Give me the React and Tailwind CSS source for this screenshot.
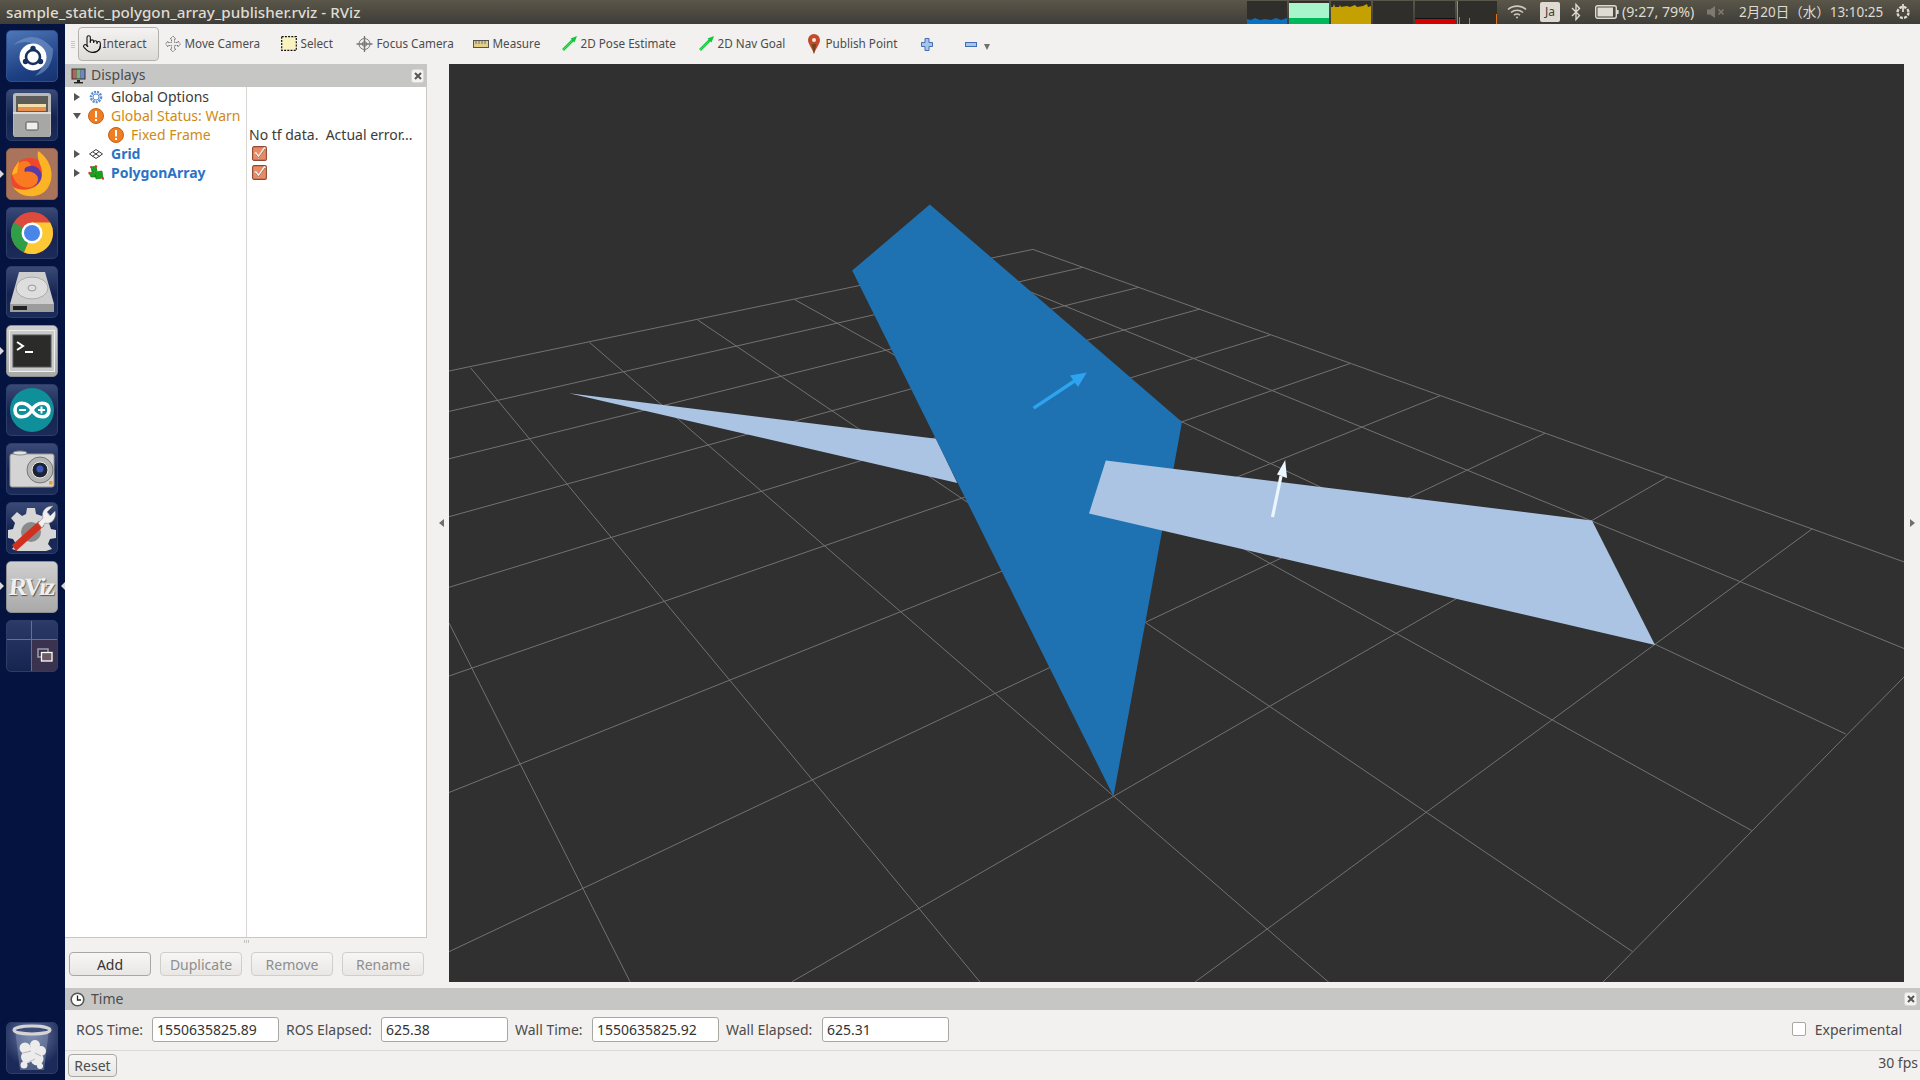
import React from "react";
import { Pointer } from "lucide-react";

const gridLines = [
  [1032.9,249.4,449,371],[1082.9,267.3,449,411.4],[1139,287.3,449,458.8],[1200,309,449,516.7],
  [1270,335,449,587.3],[1350,363.5,449,676],[1440,395.8,449,792.5],[1545,433.3,449,951.7],
  [1667.4,477,792,981.7],[1812.3,528.8,1195,982],[1904,677,1603,982],
  [1032.9,249.4,1904.3,562],[968,266.4,1904,648.5],[893,286,1845.8,734],[794.6,299.6,1751.6,830.5],
  [697.7,320,1632.5,951.6],[589.5,342.4,1329,982.5],[470.6,367.8,980,982],[449,622.9,630,981.7],
];

function Viewport() {
  return (
    <svg viewBox="449 64 1455 918" className="block w-[1455px] h-[918px] bg-[#303030]">
      {gridLines.map((l, i) => (
        <line key={i} x1={l[0]} y1={l[1]} x2={l[2]} y2={l[3]} stroke="#727272" strokeWidth="1" />
      ))}
      <polygon points="569,393.2 936,438.8 957.3,482.9" fill="#abc4e4" />
      <polygon points="929.8,204.5 852.2,270.6 1113.5,796.3 1182,422" fill="#1f72b1" />
      <polygon points="1105.8,460.4 1592,520.4 1655,645 1089,513.5" fill="#abc4e4" />
      <line x1="1033.6" y1="408.2" x2="1076" y2="380" stroke="#2ea3ef" strokeWidth="3.4" />
      <polygon points="1086.8,372.6 1070,375.5 1078,387" fill="#2ea3ef" />
      <line x1="1272.5" y1="517" x2="1281" y2="476" stroke="#eaf7ff" strokeWidth="3.2" />
      <polygon points="1285.2,460 1277,474.5 1287,478" fill="#eaf7ff" />
    </svg>
  );
}

function Tile({ children, active, bg }) {
  const cls = active
    ? "bg-[linear-gradient(180deg,#cfcfcf,#a9a9a9)] border-[#8f8f8f]"
    : "bg-[linear-gradient(180deg,#3a4a78,#14234f_55%,#1c2c5a)] border-[#2e3c68]";
  return (
    <div className={`relative w-[52px] h-[52px] rounded-[5px] border overflow-hidden flex items-center justify-center shrink-0 ${bg || cls}`}>
      {children}
    </div>
  );
}

function Launcher() {
  return (
    <div className="relative w-[65px] h-full shrink-0 bg-[#04133f] flex flex-col items-start pl-[6px] pt-[6px] gap-[7px] pb-[6px]">
      <Tile bg="bg-[linear-gradient(160deg,#4f78b8,#1d3f83_70%,#17336f)] border-[#2f4f8c]">
        <svg width="46" height="46" viewBox="0 0 46 46">
          <path d="M4 12 Q26 -6 44 16 Q44 38 26 43 Q40 30 34 18 Q22 4 4 12Z" fill="#7f9fd0" opacity=".55" />
          <circle cx="24" cy="24" r="13.5" fill="#fff" />
          <circle cx="24" cy="24" r="7" fill="none" stroke="#16305f" strokeWidth="2.6" />
          <circle cx="24" cy="15.5" r="2.7" fill="#16305f" /><circle cx="16.5" cy="28.5" r="2.7" fill="#16305f" /><circle cx="31.5" cy="28.5" r="2.7" fill="#16305f" />
        </svg>
      </Tile>
      <Tile>
        <svg width="44" height="46" viewBox="0 0 44 46">
          <rect x="3" y="1" width="38" height="44" rx="3" fill="#b9bab8" />
          <rect x="6" y="4" width="32" height="16" fill="#5c5c5a" />
          <rect x="8" y="12" width="28" height="3" fill="#f4dfa9" /><rect x="8" y="15" width="28" height="4" fill="#e68f52" />
          <rect x="4" y="20" width="36" height="25" fill="#a7a8a6" />
          <rect x="3" y="20" width="38" height="2" fill="#dadad8" />
          <rect x="16" y="30" width="12" height="8" rx="1" fill="#efefef" stroke="#555" />
        </svg>
      </Tile>
      <Tile bg="bg-[#a9735c] border-[#8d5f4c]">
        <svg width="50" height="50" viewBox="0 0 50 50">
          <circle cx="23" cy="28" r="19" fill="#f0462a" />
          <circle cx="24" cy="27" r="10.5" fill="#5b3aa6" />
          <path d="M31 2 C44 10 49 28 40 40 C32 50 14 50 6 38 C17 44 33 40 35 27 C36 16 29 12 31 2Z" fill="#fcb424" />
          <path d="M5 24 C8 12 22 8 24 17 C20 17 16 19 18 23 C26 21 34 27 30 34 C24 42 8 40 5 24Z" fill="#f97a21" />
          <path d="M12 12 C9 16 6 20 5 26 L10 24Z" fill="#fcb424" />
        </svg>
      </Tile>
      <Tile>
        <svg width="44" height="44" viewBox="0 0 44 44">
          <circle cx="22" cy="22" r="21" fill="#de4a3c" />
          <path d="M22 22 L3.8 11.5 A21 21 0 0 0 14 41.4Z" fill="#2f9e47" />
          <path d="M22 22 L14 41.4 A21 21 0 0 0 40.2 11.5 L22 11.5Z" fill="#fcc934" />
          <circle cx="22" cy="22" r="10.5" fill="#fff" /><circle cx="22" cy="22" r="8" fill="#4a86e8" />
        </svg>
      </Tile>
      <Tile>
        <svg width="46" height="44" viewBox="0 0 46 44">
          <path d="M10 2 H36 L45 34 V42 H1 V34Z" fill="#cdcdcd" />
          <path d="M1 34 H45 V42 H1Z" fill="#9c9c9c" />
          <rect x="4" y="36" width="14" height="4" fill="#222" />
          <ellipse cx="23" cy="18" rx="16" ry="11" fill="#dedede" stroke="#aaa" />
          <ellipse cx="23" cy="18" rx="4" ry="3" fill="none" stroke="#999" />
        </svg>
      </Tile>
      <Tile active>
        <svg width="46" height="42" viewBox="0 0 46 42">
          <rect x="0.5" y="0.5" width="45" height="41" fill="#c9c9c9" stroke="#eee" />
          <rect x="4" y="5" width="38" height="32" fill="#2b2b2a" stroke="#555" />
          <path d="M8 12 L14 16 L8 20" fill="none" stroke="#fff" strokeWidth="2" />
          <rect x="16" y="21" width="8" height="2" fill="#fff" />
        </svg>
      </Tile>
      <Tile>
        <svg width="46" height="46" viewBox="0 0 46 46">
          <circle cx="23" cy="23" r="22" fill="#0f8f9a" />
          <path d="M23 23 C18 14 6 14 6 23 C6 32 18 32 23 23 C28 14 40 14 40 23 C40 32 28 32 23 23Z" fill="none" stroke="#fff" strokeWidth="3.6" />
          <path d="M10 23 H17 M29 23 H36 M32.5 19.5 V26.5" stroke="#fff" strokeWidth="2" />
        </svg>
      </Tile>
      <Tile>
        <svg width="46" height="40" viewBox="0 0 46 40">
          <rect x="1" y="5" width="44" height="33" rx="2" fill="#d4d4d4" stroke="#999" />
          <ellipse cx="11" cy="4" rx="7" ry="2" fill="#e2e2e2" stroke="#888" />
          <circle cx="31" cy="21" r="13" fill="#b5b5b5" stroke="#777" />
          <circle cx="31" cy="21" r="8" fill="#1d2330" stroke="#eee" />
          <circle cx="31" cy="20" r="3.5" fill="#3a57c4" />
          <rect x="40" y="32" width="3.5" height="3.5" fill="#f0a020" />
        </svg>
      </Tile>
      <Tile>
        <svg width="48" height="48" viewBox="0 0 48 48">
          <path d="M19 4 H27 L28 10 L34 12 L39 8 L45 14 L41 19 L43 25 L48 26 V34 L42 35 L40 40 L44 45 L38 47 H10 L4 45 L8 40 L5 35 L0 34 V26 L5 25 L7 19 L3 14 L9 8 L14 12 L18 10Z" fill="#d6d6d6" />
          <circle cx="23" cy="28" r="10" fill="#8a8a8a" />
          <path d="M4 41 L8 47 L36 22 L31 17Z" fill="#d2301f" />
          <path d="M30 19 L35 14 C33 8 37 2 45 2 L39 8 L42 12 L47 7 C49 15 43 21 37 19 L34 24Z" fill="#f0f0f0" stroke="#888" strokeWidth=".6" />
        </svg>
      </Tile>
      <Tile active>
        <span className="font-['Liberation_Serif',serif] font-bold text-[25px] tracking-[-2px] text-[#efefef] [text-shadow:1px_1px_1px_#555] -skew-x-6 pr-[2px]">RViz</span>
      </Tile>
      <Tile bg="bg-[linear-gradient(180deg,#2c3a68,#15244f)] border-[#2e3c68]">
        <div className="grid grid-cols-2 w-full h-full">
          <div className="border-r border-b border-[#66708f]" />
          <div className="border-b border-[#66708f]" />
          <div className="border-r border-[#66708f]" />
          <div className="bg-[#3a3350] flex items-center justify-center">
            <svg width="16" height="14" viewBox="0 0 16 14">
              <rect x="1" y="1" width="10" height="8" fill="none" stroke="#a0a0a8" strokeWidth="1.5" />
              <rect x="4.5" y="4.5" width="10.5" height="8.5" fill="#6c5b66" stroke="#fff" strokeWidth="1.3" />
            </svg>
          </div>
        </div>
      </Tile>
      <div className="mt-auto">
        <Tile bg="bg-[radial-gradient(circle_at_50%_25%,#6f7ea6,#1b2a58_70%)] border-[#2e3c68]">
          <svg width="42" height="48" viewBox="0 0 42 48">
            <path d="M4 6 L9 46 H33 L38 6Z" fill="#8e9cbc" opacity=".45" />
            <ellipse cx="21" cy="6" rx="18" ry="4" fill="#3f4d78" stroke="#d4d4d4" strokeWidth="3" />
            <g fill="#ececec">
              <circle cx="14" cy="24" r="5.5" /><circle cx="24" cy="21" r="5" /><circle cx="30" cy="27" r="5" />
              <circle cx="16" cy="33" r="6" /><circle cx="26" cy="35" r="6.5" /><circle cx="13" cy="41" r="3.5" /><circle cx="29" cy="42" r="3" />
              <circle cx="21" cy="28" r="5" />
            </g>
            <path d="M12 29 L20 27 M24 29 L30 32 M18 38 L24 35" stroke="#b5b5b5" />
          </svg>
        </Tile>
      </div>
      <span className="absolute left-0 top-[323px] w-0 h-0 border-y-[4px] border-y-transparent border-l-[4px] border-l-[#d8d8d8]" />
      <span className="absolute left-0 top-[558px] w-0 h-0 border-y-[4px] border-y-transparent border-l-[4px] border-l-[#d8d8d8]" />
      <span className="absolute right-0 top-[558px] w-0 h-0 border-y-[4px] border-y-transparent border-r-[4px] border-r-[#d8d8d8]" />
      <span className="absolute left-0 top-[146px] w-0 h-0 border-y-[4px] border-y-transparent border-l-[4px] border-l-[#d8d8d8]" />
    </div>
  );
}

function Graph({ children, left }) {
  return <div className={`relative w-[40px] h-[23px] bg-[#2f2e2b] overflow-hidden ${left}`}>{children}</div>;
}

function TopBar() {
  return (
    <div className="h-[24px] shrink-0 flex items-center bg-[linear-gradient(180deg,#5a5649,#3e3d38)] text-[#dfdbd2] text-[14.2px] pl-[6px]">
      <span className="w-[1241px] shrink-0 whitespace-nowrap text-[15.2px] font-medium">sample_static_polygon_array_publisher.rviz - RViz</span>
      <div className="flex gap-[2px] self-end">
        <Graph>
          <svg className="absolute inset-0" width="40" height="23" viewBox="0 0 40 23"><path d="M0 23 V18 L4 19 L8 17 L13 19 L18 18 L24 19 L29 17 L34 19 L40 17 V23Z" fill="#0a70c0" /></svg>
        </Graph>
        <Graph>
          <div className="absolute inset-x-0 top-[2px] h-[15px] bg-[#a9f5cb]" />
          <div className="absolute inset-x-0 bottom-0 h-[6px] bg-[#00b85c]" />
        </Graph>
        <Graph>
          <svg className="absolute inset-0" width="40" height="23" viewBox="0 0 40 23"><path d="M0 23 V6 L2 6 L3 3 L4 6 L8 6 L9 4 L10 6 L16 5 L19 6 L24 4 L26 6 L32 5 L36 3 L37 6 L40 5 V23Z" fill="#c4a000" /></svg>
        </Graph>
        <Graph />
        <Graph>
          <div className="absolute inset-x-0 bottom-0 h-[5px] bg-[#d40000]" />
          <div className="absolute inset-x-0 bottom-[5px] h-px bg-[#111]" />
        </Graph>
        <Graph>
          <div className="absolute left-0 top-0 w-px h-[23px] bg-[#e8701a]" />
          <div className="absolute left-[2px] bottom-0 w-px h-[7px] bg-[#e8701a]" />
          <div className="absolute left-[12px] bottom-0 w-px h-[6px] bg-[#e8701a]" />
          <div className="absolute right-0 bottom-0 w-px h-[10px] bg-[#e8701a]" />
        </Graph>
      </div>
      <svg className="ml-[10px] shrink-0" width="20" height="16" viewBox="0 0 20 16" fill="none" stroke="#cfcbc3" strokeWidth="1.6">
        <path d="M1 5.5 C6 1 14 1 19 5.5" /><path d="M4 8.5 C7.5 5.5 12.5 5.5 16 8.5" /><path d="M7 11.2 C9 9.6 11 9.6 13 11.2" /><circle cx="10" cy="13.5" r="1" fill="#cfcbc3" stroke="none" />
      </svg>
      <span className="ml-[13px] w-[20px] h-[20px] shrink-0 rounded-[2px] bg-[#dfdbd2] text-[#3c3b37] text-[12px] flex items-center justify-center">Ja</span>
      <svg className="ml-[11px] shrink-0" width="10" height="18" viewBox="0 0 10 18" fill="none" stroke="#dfdbd2" strokeWidth="1.4">
        <path d="M1 5 L8.5 12.5 L5 16.5 V1.5 L8.5 5.5 L1 13" />
      </svg>
      <svg className="ml-[14px] shrink-0" width="24" height="14" viewBox="0 0 24 14">
        <rect x="0.7" y="0.7" width="20.6" height="12.6" rx="2" fill="none" stroke="#dfdbd2" strokeWidth="1.4" />
        <rect x="2.5" y="2.5" width="15.5" height="9" fill="#dfdbd2" />
        <rect x="22" y="5" width="1.6" height="4" fill="#dfdbd2" />
      </svg>
      <span className="ml-[3px] w-[73px] shrink-0 whitespace-nowrap">(9:27, 79%)</span>
      <svg className="ml-[12px] shrink-0" width="18" height="14" viewBox="0 0 18 14" fill="#7d7a72">
        <path d="M0 4.5 H3 L8 1 V13 L3 9.5 H0Z" />
        <path d="M11.5 4.5 L16.5 9.5 M16.5 4.5 L11.5 9.5" stroke="#7d7a72" strokeWidth="1.6" />
      </svg>
      <span className="ml-[14px] w-[143px] shrink-0 whitespace-nowrap text-[13.5px]">2月20日（水）13:10:25</span>
      <svg className="ml-[13px] shrink-0" width="16" height="18" viewBox="0 0 16 18" fill="none" stroke="#dfdbd2" strokeWidth="2.4">
        <circle cx="8" cy="9.5" r="5.5" strokeDasharray="3 1.3" />
        <path d="M8 1 V9" strokeWidth="1.8" />
      </svg>
    </div>
  );
}

const Arrow = () => (
  <svg className="shrink-0" width="17" height="17" viewBox="0 0 17 17">
    <line x1="2" y1="15" x2="12" y2="5" stroke="#10c93a" strokeWidth="2.6" />
    <polygon points="16,1 9.5,3.5 13.5,7.5" fill="#10c93a" />
    <line x1="2" y1="15" x2="11" y2="6" stroke="#55f070" strokeWidth=".7" />
  </svg>
);

function ToolItem({ w, icon, label, gap = "gap-[4px]" }) {
  return (
    <div className={`flex items-center shrink-0 ${gap} ${w}`}>
      {icon}
      <span className="whitespace-nowrap">{label}</span>
    </div>
  );
}

function Toolbar() {
  return (
    <div className="h-[40px] shrink-0 bg-[#f2f1ef] flex items-center text-[11.7px] text-[#4c4c4c]">
      <div className="ml-[4px] w-[8.5px] flex flex-col gap-[1px] items-center shrink-0">
        <span className="w-[4px] h-px bg-[#c9c7c2]" /><span className="w-[4px] h-px bg-[#c9c7c2]" /><span className="w-[4px] h-px bg-[#c9c7c2]" /><span className="w-[4px] h-px bg-[#c9c7c2]" />
      </div>
      <div className="w-[81px] h-[34px] shrink-0 rounded-[4px] border border-[#b3b1ab] bg-[linear-gradient(180deg,#f4f3f1,#dedcd8)] flex items-center pl-[3px] gap-[1px] text-[12px]">
        <Pointer size={20} strokeWidth={1.3} color="#111" className="shrink-0" />
        <span>Interact</span>
      </div>
      <div className="w-[6px] shrink-0" />
      <ToolItem w="w-[116px]" label="Move Camera" icon={
        <svg className="shrink-0" width="16" height="18" viewBox="0 0 16 18" fill="#eee" stroke="#666" strokeWidth=".9" strokeDasharray="1.2 .6">
          <path d="M8 1 L11 4 H9.5 V7.5 H13 V6 L15.5 9 L13 12 V10.5 H9.5 V14 H11 L8 17 L5 14 H6.5 V10.5 H3 V12 L.5 9 L3 6 V7.5 H6.5 V4 H5Z" />
        </svg>} />
      <ToolItem w="w-[75px]" label="Select" icon={
        <svg className="shrink-0" width="16" height="15" viewBox="0 0 16 15">
          <rect x=".7" y=".7" width="14.6" height="13.6" fill="#fbf3bf" stroke="#111" strokeWidth="1.2" strokeDasharray="2 1.2" />
        </svg>} />
      <ToolItem w="w-[117px]" label="Focus Camera" icon={
        <svg className="shrink-0" width="17" height="18" viewBox="0 0 17 18" fill="none" stroke="#777" strokeWidth="1">
          <circle cx="8.5" cy="9" r="5.5" fill="#eee" /><circle cx="8.5" cy="9" r="2.3" />
          <path d="M8.5 1 V17 M.5 9 H16.5" strokeWidth="1.4" />
        </svg>} />
      <ToolItem w="w-[88px]" label="Measure" icon={
        <svg className="shrink-0" width="16" height="8" viewBox="0 0 16 8">
          <rect x=".5" y=".5" width="15" height="7" fill="#e2d08a" stroke="#555" />
          <path d="M3 1 V4 M6 1 V4 M9 1 V4 M12 1 V4" stroke="#555" strokeWidth=".8" />
        </svg>} />
      <ToolItem w="w-[137px]" label="2D Pose Estimate" gap="gap-[3px]" icon={<Arrow />} />
      <ToolItem w="w-[110px]" label="2D Nav Goal" gap="gap-[3px]" icon={<Arrow />} />
      <ToolItem w="w-[113px]" label="Publish Point" gap="gap-[6px]" icon={
        <svg className="shrink-0" width="12" height="20" viewBox="0 0 12 20">
          <path d="M6 20 C4 14 0 10 0 6 A6 6 0 0 1 12 6 C12 10 8 14 6 20Z" fill="#c4492a" />
          <path d="M6 20 C5 15 4 13 4 10 H8 C8 13 7 15 6 20Z" fill="#6e4720" />
          <circle cx="6" cy="6" r="2" fill="#f3e7df" />
        </svg>} />
      <svg className="shrink-0" width="12" height="13" viewBox="0 0 12 13">
        <path d="M4 .5 H8 V4.5 H11.5 V8.5 H8 V12.5 H4 V8.5 H.5 V4.5 H4Z" fill="#a9c4e8" stroke="#3f6fb2" />
      </svg>
      <div className="w-[32px] shrink-0" />
      <svg className="shrink-0" width="12" height="5" viewBox="0 0 12 5">
        <rect x=".5" y=".5" width="11" height="4" fill="#a9c4e8" stroke="#3f6fb2" />
      </svg>
      <div className="w-[7px] shrink-0" />
      <span className="w-0 h-0 mt-[6px] border-x-[3.5px] border-x-transparent border-t-[6px] border-t-[#6f6f6f]" />
    </div>
  );
}

function Expander({ open }) {
  return open
    ? <span className="w-0 h-0 border-x-[4px] border-x-transparent border-t-[6px] border-t-[#555] shrink-0 ml-[8px] mr-[7px]" />
    : <span className="w-0 h-0 border-y-[4px] border-y-transparent border-l-[6px] border-l-[#555] shrink-0 ml-[9px] mr-[8px]" />;
}

const WarnIcon = () => (
  <svg className="shrink-0" width="16" height="16" viewBox="0 0 16 16">
    <circle cx="8" cy="8" r="7.5" fill="#ef7d22" stroke="#c85f12" />
    <rect x="7" y="3" width="2" height="6.5" fill="#fff" /><rect x="7" y="11" width="2" height="2" fill="#fff" />
  </svg>
);

const Check = () => (
  <svg width="15" height="15" viewBox="0 0 15 15">
    <rect x=".6" y=".6" width="13.8" height="13.8" rx="1.5" fill="#e88a63" stroke="#8d4a33" strokeWidth="1.1" />
    <path d="M3 6.5 L6.5 11 L13 1.5" fill="none" stroke="#f7efe9" strokeWidth="2.2" />
    <path d="M3 7.5 L6.5 12 L13 3" fill="none" stroke="#7d4330" strokeWidth=".7" />
  </svg>
);

function Row({ children }) {
  return <div className="h-[19px] flex items-center whitespace-pre">{children}</div>;
}

function PanelHeader({ title, icon, h }) {
  return (
    <div className={`bg-[#c6c6c5] flex items-center text-[14px] text-[#4c4c4c] shrink-0 ${h}`}>
      <div className="w-[26px] flex justify-center shrink-0">{icon}</div>
      <span className="pb-[2px]">{title}</span>
      <span className="ml-auto mr-[3px] w-[13px] h-[14px] rounded-[3px] bg-[#f4f3f1] border border-[#d8d8d6] flex items-center justify-center">
        <svg width="8" height="8" viewBox="0 0 8 8"><path d="M1 1 L7 7 M7 1 L1 7" stroke="#555" strokeWidth="2" /></svg>
      </span>
    </div>
  );
}

function Btn({ children, disabled, w }) {
  return (
    <div className={`h-[24px] shrink-0 rounded-[4px] border flex items-center justify-center text-[14px] bg-[linear-gradient(180deg,#f7f6f5,#e9e7e4)] ${w} ${disabled ? "border-[#d0cec9] text-[#8e8e8e]" : "border-[#a9a7a1] text-[#333]"}`}>
      {children}
    </div>
  );
}

function Displays() {
  return (
    <div className="w-[362px] shrink-0 flex flex-col">
      <PanelHeader h="h-[23px]" title="Displays" icon={
        <svg width="15" height="16" viewBox="0 0 15 16">
          <rect x=".5" y=".5" width="14" height="11" fill="#333" />
          <rect x="1.5" y="1.5" width="4" height="9" fill="#b9615c" /><rect x="5.5" y="1.5" width="4" height="9" fill="#79b07c" /><rect x="9.5" y="1.5" width="4" height="9" fill="#6f88c4" />
          <rect x="6" y="12" width="3" height="2" fill="#222" /><rect x="3" y="14" width="9" height="1.4" fill="#222" />
        </svg>} />
      <div className="h-[851px] shrink-0 flex bg-white border-r border-b border-[#c8c7c4] text-[14px]">
        <div className="w-[181px] shrink-0 text-[#3c3b37]">
          <Row>
            <Expander />
            <svg className="shrink-0" width="16" height="14" viewBox="-1 0 16 14"><circle cx="7" cy="7" r="5" fill="none" stroke="#5f8ed0" strokeWidth="2.6" strokeDasharray="2 1" /><circle cx="7" cy="7" r="3" fill="none" stroke="#5f8ed0" strokeWidth="1" /></svg>
            <span className="ml-[7px]">Global Options</span>
          </Row>
          <Row>
            <Expander open />
            <WarnIcon />
            <span className="ml-[7px] text-[#cf8a16]">Global Status: Warn</span>
          </Row>
          <Row>
            <span className="ml-[43px]" /><WarnIcon />
            <span className="ml-[7px] text-[#cf8a16]">Fixed Frame</span>
          </Row>
          <Row>
            <Expander />
            <svg className="shrink-0" width="16" height="10" viewBox="-1 0 16 10" fill="none" stroke="#3a3a3a" strokeWidth="1"><path d="M7 .5 L13.5 5 L7 9.5 L.5 5Z" /><path d="M4 3 L10.5 7.5 M10 2.7 L3.7 7.3" /></svg>
            <span className="ml-[7px] font-bold text-[#2a73c5]">Grid</span>
          </Row>
          <Row>
            <Expander />
            <svg className="shrink-0" width="16" height="16" viewBox="0 0 16 16">
              <path d="M3 2 L8 1 L9 6 L4 7Z" fill="#16a516" stroke="#0c6a0c" strokeWidth=".6" />
              <path d="M7 7 L14 6 L15 13 L8 14Z" fill="#16a516" stroke="#0c6a0c" strokeWidth=".6" />
              <path d="M1 8 L6 7 L8 12 L3 12Z" fill="#16a516" stroke="#0c6a0c" strokeWidth=".6" />
              <circle cx="8" cy="1.5" r="1.2" fill="#d33" /><circle cx="15" cy="13.5" r="1.2" fill="#d33" /><circle cx="1.5" cy="8" r="1.2" fill="#d33" /><circle cx="3" cy="2" r="1" fill="#d33" />
            </svg>
            <span className="ml-[7px] font-bold text-[#2a73c5]">PolygonArray</span>
          </Row>
        </div>
        <div className="flex-1 border-l border-[#d8d7d4] text-[#3c3b37]">
          <Row />
          <Row />
          <Row><span className="ml-[2px]">No tf data.  Actual error...</span></Row>
          <Row><span className="ml-[5px] flex"><Check /></span></Row>
          <Row><span className="ml-[5px] flex"><Check /></span></Row>
        </div>
      </div>
      <div className="h-[14px] shrink-0 flex items-start justify-center pt-[2px] gap-px">
        <span className="w-px h-[3px] bg-[#c4c3c0]" /><span className="w-px h-[3px] bg-[#c4c3c0]" /><span className="w-px h-[3px] bg-[#c4c3c0]" />
      </div>
      <div className="flex gap-[9px] pl-[4px]">
        <Btn w="w-[82px]">Add</Btn>
        <Btn disabled w="w-[82px]">Duplicate</Btn>
        <Btn disabled w="w-[82px]">Remove</Btn>
        <Btn disabled w="w-[82px]">Rename</Btn>
      </div>
    </div>
  );
}

function Field({ label, value, lw }) {
  return (
    <>
      <span className={`shrink-0 whitespace-nowrap ${lw}`}>{label}</span>
      <span className="w-[127px] h-[25px] shrink-0 bg-white border border-[#a9a7a1] rounded-[3px] flex items-center pl-[4px] text-[#333]">{value}</span>
    </>
  );
}

function TimePanel() {
  return (
    <div className="flex flex-col text-[14px] text-[#4c4c4c]">
      <PanelHeader h="h-[22px]" title="Time" icon={
        <svg className="ml-[-1px]" width="15" height="15" viewBox="0 0 15 15"><circle cx="7.5" cy="7.5" r="6.3" fill="#fff" stroke="#555" strokeWidth="1.6" /><path d="M7.5 3.5 V8 H11" fill="none" stroke="#222" strokeWidth="1.3" /></svg>} />
      <div className="h-[41px] shrink-0 flex items-center border-b border-[#dad9d6] pl-[11px] pb-[2px]">
        <Field label="ROS Time:" value="1550635825.89" lw="w-[76px]" />
        <span className="w-[7px] shrink-0" />
        <Field label="ROS Elapsed:" value="625.38" lw="w-[95px]" />
        <span className="w-[7px] shrink-0" />
        <Field label="Wall Time:" value="1550635825.92" lw="w-[77px]" />
        <span className="w-[7px] shrink-0" />
        <Field label="Wall Elapsed:" value="625.31" lw="w-[96px]" />
        <span className="w-[14px] h-[14px] ml-auto shrink-0 bg-white border border-[#a9a7a1] rounded-[2px]" />
        <span className="ml-[9px] mr-[18px] whitespace-nowrap">Experimental</span>
      </div>
      <div className="h-[29px] shrink-0 flex items-start pl-[3px]">
        <div className="mt-[3px] w-[49px] h-[23px] rounded-[4px] border border-[#a9a7a1] bg-[linear-gradient(180deg,#f7f6f5,#e9e7e4)] flex items-center justify-center">Reset</div>
        <span className="ml-auto mr-[2px] mt-[1px]">30 fps</span>
      </div>
    </div>
  );
}

export default function App() {
  return (
    <div className="w-[1920px] h-[1080px] overflow-hidden flex flex-col bg-[#f2f1ef] font-['Noto_Sans','Noto_Sans_CJK_JP',sans-serif]">
      <TopBar />
      <div className="flex flex-1 min-h-0">
        <Launcher />
        <div className="flex-1 min-w-0 flex flex-col">
          <Toolbar />
          <div className="h-[924px] shrink-0 flex">
            <Displays />
            <div className="w-[22px] shrink-0 flex items-center justify-center pb-[6px] pl-[6px]">
              <span className="w-0 h-0 border-y-[4px] border-y-transparent border-r-[5px] border-r-[#6f6f6f]" />
            </div>
            <div className="w-[1455px] h-[918px] shrink-0"><Viewport /></div>
            <div className="flex-1 flex items-center justify-center pb-[6px]">
              <span className="w-0 h-0 border-y-[4px] border-y-transparent border-l-[5px] border-l-[#6f6f6f] ml-[1px]" />
            </div>
          </div>
          <TimePanel />
        </div>
      </div>
    </div>
  );
}
